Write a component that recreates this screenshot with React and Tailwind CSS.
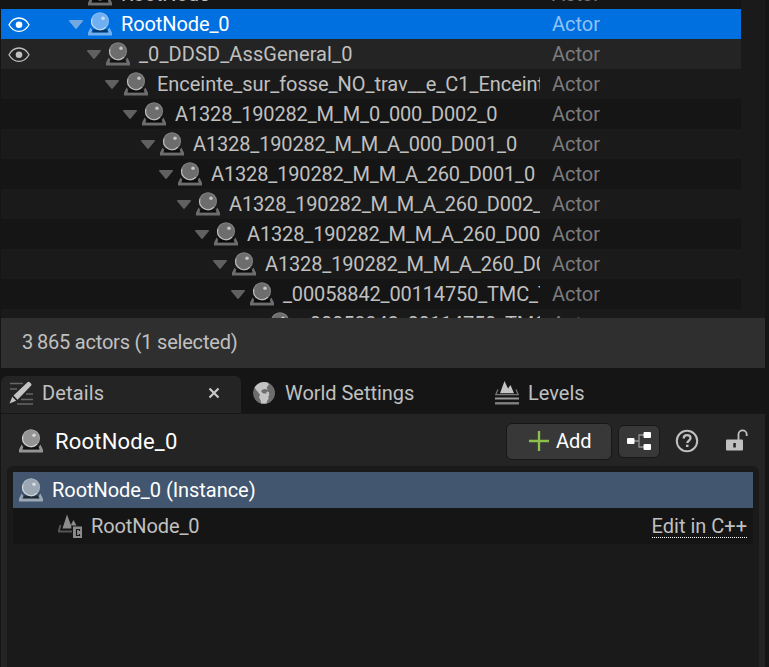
import React from "react";

function ActorIcon({ className = "" }) {
  return (
    <svg width="24" height="24" viewBox="0 0 24 24" className={`shrink-0 ${className}`}>
      <path d="M2.600 15.500 4.200 18l-.9 2.500h17.400L19.800 18l1.600-2.500L24 20.800v2.700H0v-2.700z" fill="currentColor" />
      <path d="M4 20.400 5 17.500h14l1 2.900z" fill="#000" fillOpacity="0.500" />
      <circle cx="12" cy="9.200" r="9" fill="currentColor" />
      <circle cx="12" cy="9.200" r="8.400" fill="none" stroke="#fff" strokeOpacity="0.15" strokeWidth="1.100" />
      <path d="M3.900 7a8.400 8.400 0 0 0 14 8.200" fill="none" stroke="#fff" strokeOpacity="0.500" strokeWidth="1.200" />
      <circle cx="15" cy="6.200" r="1.800" fill="#fff" fillOpacity="0.600" />
    </svg>
  );
}

function Eye() {
  return (
    <svg width="22" height="16" viewBox="0 0 22 16" fill="none">
      <path d="M1 7.700C3.500 3.300 7 1 11 1S18.500 3.300 21 7.700c-2.500 4.400-6 6.700-10 6.700S3.500 12.100 1 7.700Z" stroke="currentColor" strokeWidth="1.300" />
      <circle cx="11" cy="7.700" r="3.300" fill="currentColor" />
    </svg>
  );
}

const indents = ["pl-[51px]", "pl-[68px]", "pl-[86px]", "pl-[104px]", "pl-[122px]", "pl-[140px]", "pl-[158px]", "pl-[176px]", "pl-[194px]", "pl-[212px]", "pl-[230px]", "pl-[248px]"];

const rows = [
  { name: "RootNode", level: 1, leaf: true, bg: "bg-[#151515]", tracking: "tracking-[-0.1px]" },
  { name: "RootNode_0", level: 1, selected: true, eye: true, bg: "bg-[#0070e0]", tracking: "tracking-[-0.1px]" },
  { name: "_0_DDSD_AssGeneral_0", level: 2, eye: true, bg: "bg-[#242424]", tracking: "tracking-[0.1px]" },
  { name: "Enceinte_sur_fosse_NO_trav__e_C1_Enceinte", level: 3, bg: "bg-[#1a1a1a]", tracking: "tracking-[-0.04px]" },
  { name: "A1328_190282_M_M_0_000_D002_0", level: 4, bg: "bg-[#151515]", tracking: "tracking-[-0.15px]" },
  { name: "A1328_190282_M_M_A_000_D001_0", level: 5, bg: "bg-[#1a1a1a]", tracking: "tracking-[-0.15px]" },
  { name: "A1328_190282_M_M_A_260_D001_0", level: 6, bg: "bg-[#151515]", tracking: "tracking-[-0.15px]" },
  { name: "A1328_190282_M_M_A_260_D002_0", level: 7, bg: "bg-[#1a1a1a]", tracking: "tracking-[-0.15px]" },
  { name: "A1328_190282_M_M_A_260_D003_0", level: 8, bg: "bg-[#151515]", tracking: "tracking-[-0.15px]" },
  { name: "A1328_190282_M_M_A_260_D004_0", level: 9, bg: "bg-[#1a1a1a]", tracking: "tracking-[-0.15px]" },
  { name: "_00058842_00114750_TMC_T_0", level: 10, bg: "bg-[#151515]", tracking: "tracking-[-0.15px]" },
  { name: "_00058842_00114750_TMC_T_1", level: 11, leaf: true, bg: "bg-[#1a1a1a]", tracking: "tracking-[-0.15px]" },
];

function Row({ row }) {
  const { name, level, leaf, selected, eye, bg, tracking } = row;
  return (
    <div className={`flex h-[30px] w-[740px] shrink-0 items-center ${bg}`}>
      <div className={`flex w-[539px] shrink-0 items-center overflow-hidden ${eye ? "" : indents[level]}`}>
        {eye && (
          <div className={`flex shrink-0 pl-[7px] pt-px ${level === 1 ? "w-[68px]" : "w-[86px]"} ${selected ? "text-white" : "text-[#c0c0c0]"}`}>
            <Eye />
          </div>
        )}
        <svg width="14" height="9" viewBox="0 0 14 9" className={`mr-[5px] shrink-0 ${leaf ? "invisible" : ""} ${selected ? "text-[#72a9e3]" : "text-[#606060]"}`}>
          <path d="M.8 0h12.400c.8 0 1 .7.600 1.200L8 8.300c-.6.800-1.400.800-2 0L.2 1.200C-.2.700 0 0 .8 0Z" fill="currentColor" />
        </svg>
        <ActorIcon className={selected ? "text-[#72aff0]" : "text-[#6d6d6d]"} />
        <span className={`ml-[9px] whitespace-nowrap ${tracking} ${selected ? "text-white" : "text-[#c0c0c0]"}`}>{name}</span>
      </div>
      <span className={`ml-3 ${selected ? "text-[#8fc2f6]" : "text-[#7c7c7c]"}`}>Actor</span>
    </div>
  );
}

function DetailsIcon() {
  return (
    <svg width="24" height="24" viewBox="0 0 24 24">
      <path d="M1 2.500h13M1 8h7M17 13h7M12 18.500h12M8 23h16" stroke="#666" strokeWidth="1.300" />
      <path d="m4.500 14.500 14-13.300c.7-.7 1.500-.7 2.200 0l1.300 1.300c.6.700.6 1.500 0 2.200l-13.500 14zM3.300 15.800l3.900 3.900L.5 22.500z" fill="#c4c4c4" />
    </svg>
  );
}

function WorldIcon() {
  return (
    <svg width="22" height="22" viewBox="0 0 22 22">
      <circle cx="11" cy="11" r="11" fill="#6d6d6d" />
      <path d="M1.500 5.500A11 11 0 0 1 14.500.6L16 2.500l-2.200 2.700.7 2.500-2.500-.7-3 .7-.7 2.100 2 1.700h3l.5-2 2 .5.500 3-1 1.500.5 2-1.500 2-.8 3H8.200l-.7-3.600-1.500-2.500L7 12.500 4 9z" fill="#c4c4c4" />
    </svg>
  );
}

function LevelsIcon() {
  return (
    <svg width="24" height="24" viewBox="0 0 24 24">
      <path d="M5 12.300 9.500 0l3.500 7.500 2.500-3.500 3.500 8.300z" fill="#c4c4c4" />
      <path d="M3 8.500.7 13.700h22.600L21 8.500" fill="none" stroke="#777" strokeWidth="1.300" />
      <path d="M0 17.500h24" stroke="#999" strokeWidth="2" />
      <path d="M0 22.300h24" stroke="#808080" strokeWidth="2.400" />
    </svg>
  );
}

function NativeClassIcon() {
  return (
    <svg width="24" height="24" viewBox="0 0 24 24">
      <path d="M4.500 14.500 9 .5l4.300 11.500v2.500zM13.300 10 15.500 6l3 5.500h-5.200z" fill="#8c8c8c" />
      <path d="M2.500 11 .7 17.500H14" fill="none" stroke="#555" strokeWidth="2" />
      <path d="M15 12.500h9V24h-9z" fill="#8c8c8c" />
      <path d="M21.500 17v-1.500h-3v6h3V20" fill="none" stroke="#151515" strokeWidth="1.200" />
    </svg>
  );
}

export default function App() {
  return (
    <div className="flex h-[667px] w-[769px] flex-col overflow-hidden bg-[#151515] pl-px pr-1 font-['Roboto',sans-serif] text-[20px] leading-[30px] text-[#c0c0c0]">
      <div className="flex h-[318px] shrink-0 flex-col overflow-hidden bg-[#1a1a1a]">
        <div className="-mt-[21px] flex flex-col">
          {rows.map((row) => (
            <Row key={row.name} row={row} />
          ))}
        </div>
      </div>
      <div className="flex h-[50px] shrink-0 items-center bg-[#2f2f2f] pl-[21px] pb-[2px] tracking-[-0.2px]">3&#8201;865 actors (1 selected)</div>

      <div className="mt-2 flex h-[38px] shrink-0 border-b border-[#171717]">
        <div className="flex w-[240px] items-center rounded-t-md bg-[#242424] pb-[3px] pl-2">
          <DetailsIcon />
          <span className="ml-[9px] grow tracking-[0.15px]">Details</span>
          <svg width="12" height="12" viewBox="0 0 12 12" className="mr-[21px]">
            <path d="m1.500 1.500 9 9m0-9-9 9" stroke="#c8c8c8" strokeWidth="2.200" />
          </svg>
        </div>
        <div className="flex w-[241px] items-center pb-[3px] pl-3">
          <WorldIcon />
          <span className="ml-[10px] tracking-[-0.04px]">World Settings</span>
        </div>
        <div className="flex items-center pb-[3px] pl-[13px]">
          <LevelsIcon />
          <span className="ml-[9px]">Levels</span>
        </div>
      </div>

      <div className="flex min-h-0 grow flex-col bg-[#242424] px-[6px]">
        <div className="flex h-[52px] shrink-0 items-center pl-3 pt-[2px]">
          <ActorIcon className="text-[#949494]" />
          <span className="ml-3 grow pt-px text-[22px] tracking-[0.2px] text-white">RootNode_0</span>
          <button className="flex h-[37px] w-[106px] items-center rounded-md border border-[#171717] bg-[#383838] pl-[22px] text-white">
            <svg width="20" height="20" viewBox="0 0 20 20">
              <path d="M10 0v20M0 10h20" stroke="#8bc24a" strokeWidth="2.300" />
            </svg>
            <span className="ml-[7px]">Add</span>
          </button>
          <button className="ml-[6px] flex h-[33px] w-[42px] items-center justify-center rounded-md border border-[#171717] bg-[#383838]">
            <svg width="24" height="18" viewBox="0 0 24 18">
              <path d="M6 9h6M17 3h-5v12h5" fill="none" stroke="#929292" strokeWidth="1.300" />
              <rect y="6" width="7.500" height="6" rx="1" fill="#fff" />
              <rect x="16.500" width="7.500" height="6" rx="1" fill="#fff" />
              <rect x="16.500" y="12" width="7.500" height="6" rx="1" fill="#fff" />
            </svg>
          </button>
          <svg width="24" height="24" viewBox="0 0 24 24" className="ml-[15px]" fill="none">
            <circle cx="12" cy="12" r="10.200" stroke="#c0c0c0" strokeWidth="2" />
            <path d="M8.700 9.500c0-2 1.400-3.300 3.400-3.300s3.400 1.100 3.400 2.900c0 2.400-3.200 2.600-3.200 5" stroke="#c0c0c0" strokeWidth="2.300" />
            <path d="M11 15.700h2.500V18H11z" fill="#c0c0c0" />
          </svg>
          <svg width="22" height="22" viewBox="0 0 22 22" className="-mt-[3px] ml-[27px] mr-[11px]">
            <path d="M12.500 11V5.500a4.100 4.100 0 0 1 8.200 0V7" fill="none" stroke="#c0c0c0" strokeWidth="1.800" />
            <rect y="10.500" width="17" height="11" rx="1" fill="#c0c0c0" />
            <path d="M7.300 14h2.500v4.500H7.300z" fill="#242424" />
          </svg>
        </div>
        <div className="flex grow flex-col rounded-t-md bg-[#1a1a1a] px-[6px] pt-[6px]">
          <div className="flex h-9 items-center bg-[#42576f] pl-[6px] text-white">
            <ActorIcon className="text-[#9ba7b3]" />
            <span className="ml-[9px] tracking-[-0.05px]">RootNode_0 (Instance)</span>
          </div>
          <div className="flex h-9 items-center bg-[#151515] pl-[45px] pr-[6px]">
            <NativeClassIcon />
            <span className="ml-[9px] grow tracking-[-0.1px]">RootNode_0</span>
            <span className="h-[24px] border-b border-dotted border-white leading-[25px]">Edit in C++</span>
          </div>
        </div>
      </div>
    </div>
  );
}
